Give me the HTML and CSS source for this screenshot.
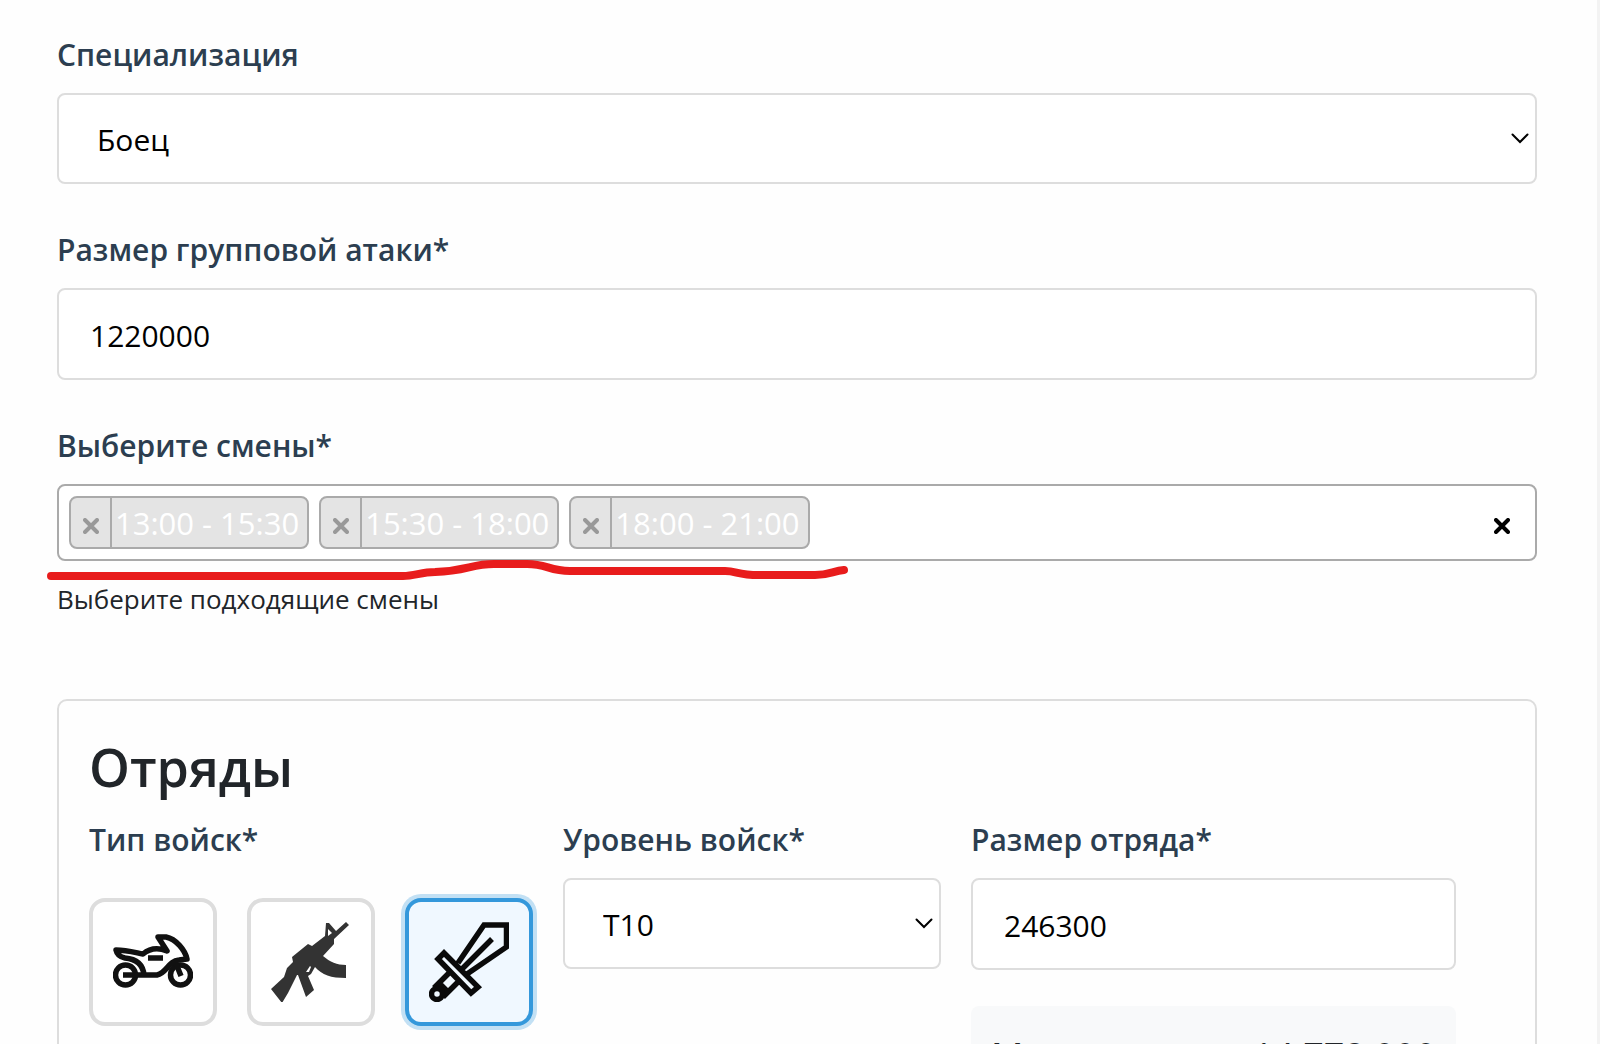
FILE: index.html
```html
<!DOCTYPE html>
<html lang="ru">
<head>
<meta charset="utf-8">
<title>Анкета</title>
<link rel="stylesheet" href="styles.css">
</head>
<body>
<main class="page">
  <form class="form">
    <div class="field">
      <label class="label" for="spec">Специализация</label>
      <div class="select-wrap">
        <select class="control select" id="spec"><option>Боец</option></select>
        <svg class="chevron" viewBox="0 0 18 11"><path d="M1.500 1.500 9 9l7.500-7.500"/></svg>
      </div>
    </div>
    <div class="field">
      <label class="label" for="rally">Размер групповой атаки*</label>
      <input class="control" id="rally" type="text" value="1220000">
    </div>
    <div class="field">
      <span class="label" id="shifts-label">Выберите смены*</span>
      <div class="tags" role="group" aria-labelledby="shifts-label">
        <span class="tag"><button class="tag-remove" type="button" aria-label="Убрать"><svg class="cross" viewBox="0 0 16 16"><path d="M2 2l12 12M14 2 2 14"/></svg></button><span class="tag-text">13:00 - 15:30</span></span>
        <span class="tag"><button class="tag-remove" type="button" aria-label="Убрать"><svg class="cross" viewBox="0 0 16 16"><path d="M2 2l12 12M14 2 2 14"/></svg></button><span class="tag-text">15:30 - 18:00</span></span>
        <span class="tag"><button class="tag-remove" type="button" aria-label="Убрать"><svg class="cross" viewBox="0 0 16 16"><path d="M2 2l12 12M14 2 2 14"/></svg></button><span class="tag-text">18:00 - 21:00</span></span>
        <button class="clear" type="button" aria-label="Очистить"><svg class="cross" viewBox="0 0 16 16"><path d="M2 2l12 12M14 2 2 14"/></svg></button>
        <svg class="underline" viewBox="0 0 810 24"><path d="M4 16H356C368 16 374 12 388 12C420 11 424 4 447 4H480C500 4 502 11 523 11H678C690 11 690 15 712 15H768C782 15 786 11 797 10"/></svg>
      </div>
      <small class="help">Выберите подходящие смены</small>
    </div>

    <section class="card">
      <h2 class="title">Отряды</h2>
      <div class="squad">
        <div class="cell">
          <span class="label" id="type-label">Тип войск*</span>
          <div class="types" role="group" aria-labelledby="type-label">
            <button class="type" type="button" aria-label="Мотоциклы">
              <svg class="icon" viewBox="0 0 80 80"><g fill="none" stroke="#111" stroke-width="5.500" stroke-linejoin="round"><circle cx="12.500" cy="53" r="10"/><circle cx="67.500" cy="53" r="10"/><path d="M10 53H44C54 51 55 39 66 38L74 37C72 28 63 17 53 15H45L54 29C44 25 36 27 30 32C20 30 13 28 3 28C4 33 7 35 12 36C24 37 30 43 31 53M62 39l6 15M35 36h15"/></g></svg>
            </button>
            <button class="type" type="button" aria-label="Стрелки">
              <svg class="icon" viewBox="0 0 80 80"><path fill="#333" fill-rule="evenodd" d="M55 1l3 0 7 8L75 0l3 3-15 14 0 5-11 12c7 6 14 9 23 9v13c-15 0-24-3-31-11l-4 7-3 2 6 14-8 7-8-22-1 0-9 18-6 10L0 67l13-12 3-9 6-6-1-5L37 22l4 2 13-10zM57 7v7l4-3zM39 44l-4 6 3 0 2-5z"/></svg>
            </button>
            <button class="type type-active" type="button" aria-label="Бойцы" aria-pressed="true">
              <svg class="icon" viewBox="0 0 80 80"><g fill="none" stroke="#0a0a0a" stroke-width="5.500" stroke-linejoin="miter"><path d="M29 41 55 3H77.500V25L38 52M33 47 63 17M15 31 9 37 42 71 49 65ZM20 51 5 66M29 60 14 75M11 62l7 7"/><circle cx="8" cy="72" r="5.500"/></g></svg>
            </button>
          </div>
        </div>
        <div class="cell">
          <label class="label" for="level">Уровень войск*</label>
          <div class="select-wrap">
            <select class="control select" id="level"><option>T10</option></select>
            <svg class="chevron" viewBox="0 0 18 11"><path d="M1.500 1.500 9 9l7.500-7.500"/></svg>
          </div>
        </div>
        <div class="cell">
          <label class="label" for="size">Размер отряда*</label>
          <input class="control" id="size" type="text" value="246300">
          <div class="info"><span>Мощь</span><span>14 778 000</span></div>
        </div>
      </div>
    </section>
  </form>
</main>
</body>
</html>
```
FILE: styles.css
```css
* {
  box-sizing: border-box;
}

html {
  background: #f3f3f3;
}

body {
  margin: 0;
  height: 100vh;
  overflow: hidden;
  color: #212529;
  font-family: "Open Sans", "Noto Sans", sans-serif;
  font-size: 30px;
  line-height: 48px;
}

.page {
  min-height: 100vh;
  margin-right: 3px;
  padding: 31px 60px 0 57px;
  background: #fefefe;
}

.field {
  margin-bottom: 42px;
}

.label {
  display: block;
  margin-bottom: 14px;
  color: #2c3e50;
  font-size: 30px;
  font-weight: 600;
  line-height: 48px;
}

.control {
  display: block;
  width: 100%;
  height: 92px;
  padding: 2px 31px 0;
  border: 2px solid #ddd;
  border-radius: 8px;
  background: #fff;
  color: #000;
  font: inherit;
}

.select-wrap {
  display: grid;
  align-items: center;
}

.select-wrap > * {
  grid-area: 1 / 1;
}

.select {
  height: 91px;
  padding-left: 38px;
  appearance: none;
}

.chevron {
  justify-self: end;
  width: 18px;
  height: 11px;
  margin-right: 8px;
  fill: none;
  stroke: #000;
  stroke-width: 2;
  stroke-linecap: round;
  pointer-events: none;
}

.tags {
  position: relative;
  display: flex;
  align-items: center;
  gap: 10px;
  height: 77px;
  padding: 0 25px 0 10px;
  border: 2px solid #aaa;
  border-radius: 8px;
  background: #fff;
}

.tag {
  display: flex;
  height: 53px;
  border: 2px solid #aaa;
  border-radius: 8px;
  background: #e4e4e4;
  color: #fff;
  font-size: 31px;
}

.tag-remove,
.clear {
  display: flex;
  align-items: center;
  justify-content: center;
  padding: 6px 0 0;
  border: 0;
  background: none;
  color: #999;
}

.tag-remove {
  width: 41px;
  border-right: 2px solid #aaa;
}

.tag-text {
  padding: 1px 8px 0 3px;
}

.cross {
  width: 16px;
  height: 16px;
  fill: none;
  stroke: currentColor;
  stroke-width: 4;
  stroke-linecap: round;
}

.clear {
  margin-left: auto;
  color: #000;
}

.underline {
  position: absolute;
  top: 74px;
  left: -12px;
  width: 810px;
  height: 24px;
  fill: none;
  stroke: #e81c1c;
  stroke-width: 8;
  stroke-linecap: round;
  stroke-linejoin: round;
}

.help {
  display: block;
  margin-top: 17px;
  font-size: 26px;
  line-height: 42px;
}

.card {
  margin-top: 79px;
  padding: 30px;
  border: 2px solid #ddd;
  border-radius: 10px;
}

.title {
  margin: 0 0 15px;
  padding-top: 2px;
  font-size: 52px;
  font-weight: 600;
  line-height: 68px;
}

.squad {
  display: grid;
  grid-template-columns: 444px 378fr 485fr;
  gap: 30px;
  padding-right: 49px;
}

.types {
  display: flex;
  gap: 30px;
  padding-top: 20px;
}

.type {
  display: flex;
  align-items: center;
  justify-content: center;
  width: 128px;
  height: 128px;
  padding: 0;
  border: 4px solid #ddd;
  border-radius: 16px;
  background: #fff;
}

.type-active {
  border-color: #3498db;
  background: #f0f8ff;
  box-shadow: 0 0 0 4px #c2e0f4;
}

.icon {
  width: 80px;
  height: 80px;
}

.info {
  display: flex;
  justify-content: space-between;
  margin-top: 36px;
  padding: 26px 20px;
  border-radius: 8px;
  background: #f8f9fa;
  font-size: 36px;
}
```
